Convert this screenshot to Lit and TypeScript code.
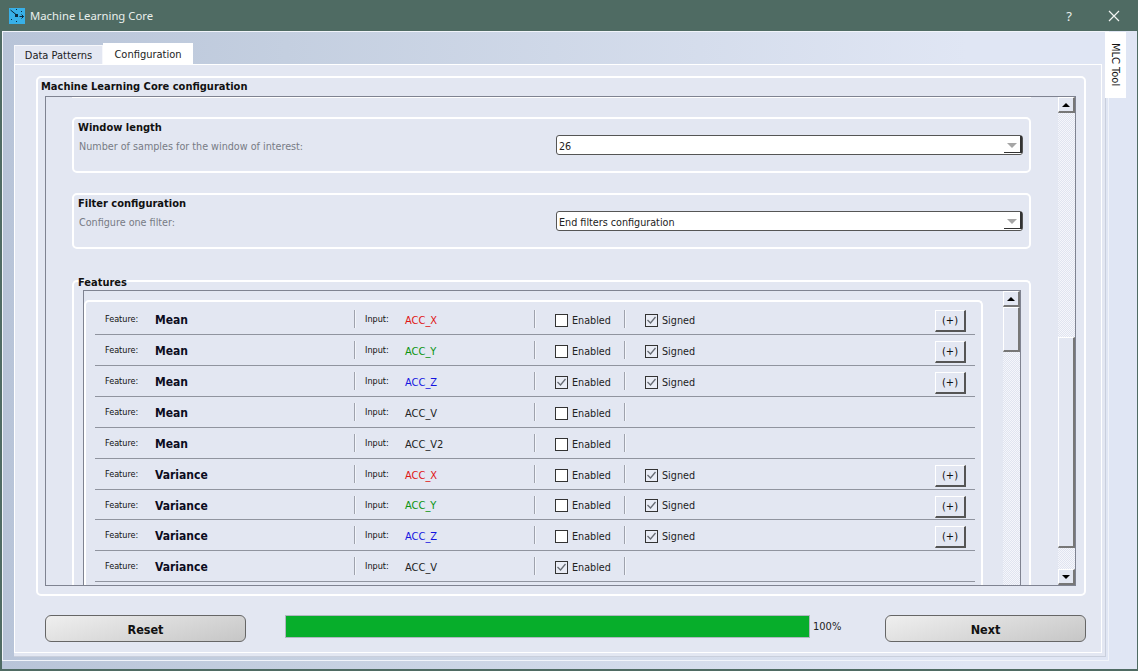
import { LitElement, html, css, svg } from "lit";
import { customElement } from "lit/decorators.js";

type Row = { name: string; input: string; color?: string; enabled: boolean; signed: boolean; short?: boolean };

const rows: Row[] = [
  { name: "Mean", input: "ACC_X", color: "x", enabled: false, signed: true },
  { name: "Mean", input: "ACC_Y", color: "y", enabled: false, signed: true },
  { name: "Mean", input: "ACC_Z", color: "z", enabled: true, signed: true },
  { name: "Mean", input: "ACC_V", enabled: false, signed: false },
  { name: "Mean", input: "ACC_V2", enabled: false, signed: false },
  { name: "Variance", input: "ACC_X", color: "x", enabled: false, signed: true },
  { name: "Variance", input: "ACC_Y", color: "y", enabled: false, signed: true, short: true },
  { name: "Variance", input: "ACC_Z", color: "z", enabled: false, signed: true },
  { name: "Variance", input: "ACC_V", enabled: true, signed: false },
];

const check = svg`<svg width="11" height="11" viewBox="0 0 11 11"><path d="M1.5 5 L4.5 8 L9.5 2" fill="none" stroke="#666b73" stroke-width="1.3"/></svg>`;

@customElement("app-root")
export class AppRoot extends LitElement {
  static styles = css`
    :host { display: block; width: 1138px; height: 671px; overflow: hidden; font-family: "DejaVu Sans", sans-serif; font-stretch: condensed; font-size: 10.7px; color: #111; background: #4f6b63; }
    * { box-sizing: border-box; }
    .window { height: 671px; display: flex; flex-direction: column; }
    .titlebar { height: 31px; flex: none; display: flex; align-items: center; padding: 0 18px 0 9px; color: #e9efec; font-family: "Noto Sans", sans-serif; font-stretch: normal; font-size: 11.3px; }
    .titlebar .logo { width: 16px; height: 16px; margin-right: 5px; flex: none; }
    .titlebar .spacer { flex: 1; }
    .titlebar .help { font-size: 13px; margin-right: 36px; }
    .client { flex: 1; margin: 0 1px 2px 2px; background: linear-gradient(90deg, #b8c4d8 0%, #c4cfe0 25%, #e0e6f4 85%); padding-bottom: 8px; display: flex; position: relative; min-height: 0; }
    .shell { width: 1107px; flex: none; border: 1px solid #f1f4fa; padding: 11px 0 3px 11px; display: flex; }
    .main { width: 1092px; flex: none; display: flex; flex-direction: column; }
    .tabs { height: 21px; flex: none; display: flex; align-items: flex-end; }
    .tab { height: 19px; width: 89px; background: #e3e7f2; border: 1px solid #f6f7fb; border-bottom: none; display: flex; align-items: center; justify-content: center; color: #222; font-size: 11px; }
    .tab.active { height: 21px; width: 90px; background: #fff; border-color: #fff; }
    .pane { flex: 1; min-height: 0; background: #e3e7f2; border-right: 1px solid #c9cfdc; border-bottom: 1px solid #c9cfdc; padding: 0 3px 3px 0; display: flex; }
    .pane-in { flex: 1; min-width: 0; border: 1px solid #fff; padding: 11px 15px 0 21px; display: flex; flex-direction: column; }
    .side { position: absolute; left: 1103px; top: 1px; width: 21px; height: 66px; background: #fff; writing-mode: vertical-rl; display: flex; align-items: center; justify-content: center; font-size: 11px; color: #111; }
    .cfg { height: 520px; flex: none; border: 2px solid #fff; border-radius: 5px; display: flex; flex-direction: column; }
    .cfg-title { height: 18px; flex: none; padding: 2px 0 0 3px; font-weight: 700; font-size: 11px; line-height: 14px; }
    .frame { height: 490px; flex: none; margin: 0 8px 0 7px; border: 1px solid #7f8391; display: flex; overflow: hidden; }
    .scroll { flex: 1; min-width: 0; overflow: hidden; padding: 0 27px 0 26px; display: flex; flex-direction: column; }
    .clip { height: 1px; flex: none; background: #fff; margin-bottom: 19px; }
    .grp { height: 56px; flex: none; border: 2px solid #fff; border-radius: 5px; display: grid; grid-template-columns: 1fr 467px; grid-template-rows: 16px 20px; padding: 0 6px 0 4px; margin-bottom: 20px; }
    .grp b { grid-column: 1 / 3; font-size: 11px; line-height: 15px; padding-top: 1px; }
    .grp .lbl { color: #777b85; align-self: center; padding: 2px 0 0 1px; }
    .select { background: #fff; border: 1px solid #555; border-radius: 3px; position: relative; padding: 2px 0 0 2px; line-height: 18px; color: #222; }
    .select .edge { position: absolute; right: 0; bottom: 1px; width: 18px; height: 17px; border-right: 2px solid #333; border-bottom: 1px solid #333; }
    .select .arrow { position: absolute; right: 5px; top: 7px; width: 0; height: 0; border: 5px solid transparent; border-top: 5px solid #a6a6a6; border-bottom: none; }
    .features { height: 340px; flex: none; margin-top: 11px; border: 2px solid #fff; border-bottom: none; border-radius: 5px 5px 0 0; padding: 0 8px 0 9px; display: flex; flex-direction: column; }
    .features > b { height: 14px; flex: none; font-size: 11px; line-height: 14px; margin: -6px 0 0 -5px; }
    .ff { flex: 1; border: 1px solid #7f8391; border-bottom: none; display: flex; min-height: 0; overflow: hidden; }
    .rowsbox { width: 899px; flex: none; margin-top: 9px; border: 2px solid #fff; border-bottom: none; border-radius: 5px 5px 0 0; padding: 2px 6px 0 9px; }
    .gap { flex: 1; }
    .row { height: 31px; border-bottom: 1px solid #90949f; display: grid; grid-template-columns: 50px 199px 11px 40px 129px 21px 69px 21px 1fr; align-items: center; padding-left: 10px; }
    .row.short { height: 30px; }
    .row .fl { font-size: 9px; }
    .row .nm { font-weight: 700; font-size: 12px; color: #0c0c1e; padding-top: 2px; }
    .sep { width: 1px; height: 18px; background: #9ea2ad; box-shadow: 1px 0 0 #f2f4fa; }
    .row .il { font-size: 9px; }
    .iv { font-size: 11px; color: #222; padding-top: 2px; }
    .iv.x { color: #e01414; }
    .iv.y { color: #0a930f; }
    .iv.z { color: #1414e0; }
    .cb { display: flex; align-items: center; gap: 4px; color: #222; padding-top: 2px; }
    .cb.signed { width: 290px; flex: none; }
    .en { grid-column: 7; }
    .box { width: 13px; height: 13px; border: 1px solid #333; background: #fff; display: flex; align-items: center; justify-content: center; flex: none; }
    .box.on { background: #e9ecf5; }
    .end { display: flex; align-items: center; }
    .plus { width: 31px; height: 22px; flex: none; margin-top: 4px; background: #e3e7f2; border: 1px solid; border-color: #fff #555 #555 #fff; border-width: 1px 2px 2px 1px; display: flex; align-items: center; justify-content: center; font-size: 11px; color: #111; }
    .sb { width: 17px; flex: none; display: flex; flex-direction: column; }
    .sbtn { height: 16px; flex: none; background: #e3e7f2; border: 1px solid; border-color: #fff #777 #777 #fff; border-width: 1px 2px 2px 1px; display: flex; align-items: center; justify-content: center; }
    .up { width: 0; height: 0; border: 4px solid transparent; border-bottom: 4px solid #000; border-top: none; }
    .dn { width: 0; height: 0; border: 4px solid transparent; border-top: 4px solid #000; border-bottom: none; }
    .track { background: repeating-conic-gradient(#f5f6fb 0 25%, #e0e4f0 0 50%) 0 0 / 2px 2px; }
    .track.t1 { flex: 1; }
    .track.t2 { height: 224px; flex: none; }
    .thumb { flex: none; background: #e3e7f2; border: 1px solid; border-color: #fff #777 #777 #fff; border-width: 1px 2px 2px 1px; }
    .thumb.small { height: 45px; }
    .thumb.big { height: 211px; }
    .actions { flex: none; display: flex; align-items: flex-start; margin-top: 19px; padding-left: 9px; }
    .btn { width: 201px; height: 27px; flex: none; padding-top: 1px; border: 1px solid #666; border-radius: 6px; background: linear-gradient(165deg, #efefef, #c6c6c6); display: flex; align-items: center; justify-content: center; font-weight: 700; font-size: 12.5px; color: #111; }
    .prog { width: 525px; height: 23px; flex: none; margin-left: 39px; background: #07ae2b; border: 1px solid #b0b8c0; }
    .pct { width: 72px; flex: none; margin-left: 3px; line-height: 23px; font-size: 11px; color: #222; }
  `;

  renderRow(r: Row) {
    return html`<div class="row ${r.short ? "short" : ""}">
      <span class="fl">Feature:</span>
      <span class="nm">${r.name}</span>
      <span class="sep"></span>
      <span class="il">Input:</span>
      <span class="iv ${r.color ?? ""}">${r.input}</span>
      <span class="sep"></span>
      <span class="cb en"><span class="box ${r.enabled ? "on" : ""}">${r.enabled ? check : ""}</span>Enabled</span>
      <span class="sep"></span>
      <span class="end">
        ${r.signed
          ? html`<span class="cb signed"><span class="box on">${check}</span>Signed</span><span class="plus">(+)</span>`
          : ""}
      </span>
    </div>`;
  }

  render() {
    return html`<div class="window">
      <div class="titlebar">
        <svg class="logo" viewBox="0 0 16 16">
          <rect width="16" height="16" fill="#38b0e8"/>
          <path d="M1.5 2 L7 6.5 M10.5 8.5 H14.5 M12.5 6.5 L14.5 8.5 L12.5 10.5" fill="none" stroke="#0d2a3c" stroke-width="1"/>
          <path d="M6 6 h3 v3 h-3 z M7 1 h1 v1 h-1 z M7 13 h1 v1 h-1 z M2 11 h1 v1 h-1 z M12 3 h1 v1 h-1 z" fill="#0d2a3c"/>
        </svg>
        <span>Machine Learning Core</span>
        <span class="spacer"></span>
        <span class="help">?</span>
        <svg width="12" height="12" viewBox="0 0 12 12"><path d="M1 1 L11 11 M11 1 L1 11" stroke="#f2f5f3" stroke-width="1.2" fill="none"/></svg>
      </div>
      <div class="client">
        <div class="shell">
          <div class="main">
            <div class="tabs">
              <div class="tab">Data Patterns</div>
              <div class="tab active">Configuration</div>
            </div>
            <div class="pane">
              <div class="pane-in">
                <div class="cfg">
                  <div class="cfg-title">Machine Learning Core configuration</div>
                  <div class="frame">
                    <div class="scroll">
                      <div class="clip"></div>
                      <div class="grp">
                        <b>Window length</b>
                        <span class="lbl">Number of samples for the window of interest:</span>
                        <div class="select">26<span class="arrow"></span><span class="edge"></span></div>
                      </div>
                      <div class="grp">
                        <b>Filter configuration</b>
                        <span class="lbl">Configure one filter:</span>
                        <div class="select">End filters configuration<span class="arrow"></span><span class="edge"></span></div>
                      </div>
                      <div class="features">
                        <b>Features</b>
                        <div class="ff">
                          <div class="rowsbox">${rows.map((r) => this.renderRow(r))}</div>
                          <div class="gap"></div>
                          <div class="sb">
                            <div class="sbtn"><span class="up"></span></div>
                            <div class="thumb small"></div>
                            <div class="track t1"></div>
                          </div>
                        </div>
                      </div>
                    </div>
                    <div class="sb">
                      <div class="sbtn"><span class="up"></span></div>
                      <div class="track t2"></div>
                      <div class="thumb big"></div>
                      <div class="track t1"></div>
                      <div class="sbtn"><span class="dn"></span></div>
                    </div>
                  </div>
                </div>
                <div class="actions">
                  <div class="btn">Reset</div>
                  <div class="prog"></div>
                  <div class="pct">100%</div>
                  <div class="btn">Next</div>
                </div>
              </div>
            </div>
          </div>
        </div>
        <div class="side">MLC Tool</div>
      </div>
    </div>`;
  }
}
